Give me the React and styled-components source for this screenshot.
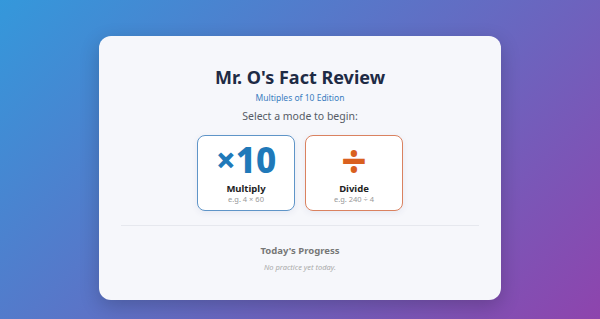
import React from "react";
import styled, { createGlobalStyle } from "styled-components";

const GlobalStyle = createGlobalStyle`
    html, body {
        margin: 0;
        padding: 0;
        height: 100%;
    }
    body {
        font-family: "Noto Sans", "DejaVu Sans", sans-serif;
    }
    #root {
        height: 100%;
    }
`;

const Page = styled.div`
    width: 100%;
    height: 319px;
    background: linear-gradient(135deg, #3498db 0%, #8e44ad 100%);
    display: flex;
    justify-content: center;
    padding-top: 36px;
    box-sizing: border-box;
    overflow: hidden;
`;

const Card = styled.div`
    width: 402px;
    height: 264px;
    box-sizing: border-box;
    background: #f6f7fb;
    border-radius: 12px;
    box-shadow: 0 6px 20px rgba(0, 0, 0, 0.2);
    padding: 29px 22px 0;
    display: flex;
    flex-direction: column;
    align-items: center;
`;

const Title = styled.h1`
    margin: 0;
    font-size: 18px;
    line-height: 24px;
    font-weight: 700;
    color: #1e2b45;
`;

const Subtitle = styled.div`
    margin-top: 3px;
    font-size: 8.5px;
    line-height: 12px;
    color: #3b7dc0;
`;

const Prompt = styled.div`
    margin-top: 5px;
    font-size: 10.5px;
    line-height: 14px;
    color: #555b66;
`;

const Modes = styled.div`
    display: flex;
    gap: 10px;
    margin-top: 12px;
`;

const ModeButton = styled.button`
    width: 98px;
    height: 76px;
    box-sizing: border-box;
    background: #fff;
    border: 1.5px solid ${props => props.accent};
    border-radius: 8px;
    display: flex;
    flex-direction: column;
    align-items: center;
    padding: 5px 0 0;
    font-family: inherit;
    cursor: pointer;
    box-shadow: 0 2px 6px rgba(60, 80, 140, 0.08);
`;

const Symbol = styled.div`
    font-size: ${props => props.size || 35}px;
    line-height: 38px;
    font-weight: 800;
    color: ${props => props.color};
`;

const ModeName = styled.div`
    margin-top: 4px;
    font-size: 9.5px;
    line-height: 12px;
    font-weight: 700;
    color: #222;
`;

const Example = styled.div`
    font-size: 7.5px;
    line-height: 9px;
    color: #999;
`;

const Divider = styled.hr`
    width: 100%;
    border: none;
    border-top: 1px solid #e6e8ee;
    margin: 14px 0 0;
`;

const ProgressTitle = styled.div`
    margin-top: 19px;
    font-size: 9.5px;
    line-height: 12px;
    font-weight: 700;
    color: #777;
`;

const Empty = styled.div`
    margin-top: 5px;
    font-size: 7.5px;
    line-height: 10px;
    font-style: italic;
    color: #aaa;
`;

export default function App(){
    return(
        <>
            <GlobalStyle />
            <Page>
                <Card>
                    <Title>Mr. O's Fact Review</Title>
                    <Subtitle>Multiples of 10 Edition</Subtitle>
                    <Prompt>Select a mode to begin:</Prompt>
                    <Modes>
                        <ModeButton accent="#5f95c8">
                            <Symbol color="#2079b9">×10</Symbol>
                            <ModeName>Multiply</ModeName>
                            <Example>e.g. 4 × 60</Example>
                        </ModeButton>
                        <ModeButton accent="#da8260">
                            <Symbol color="#d9601f" size={44}>÷</Symbol>
                            <ModeName>Divide</ModeName>
                            <Example>e.g. 240 ÷ 4</Example>
                        </ModeButton>
                    </Modes>
                    <Divider />
                    <ProgressTitle>Today's Progress</ProgressTitle>
                    <Empty>No practice yet today.</Empty>
                </Card>
            </Page>
        </>
    )
}
